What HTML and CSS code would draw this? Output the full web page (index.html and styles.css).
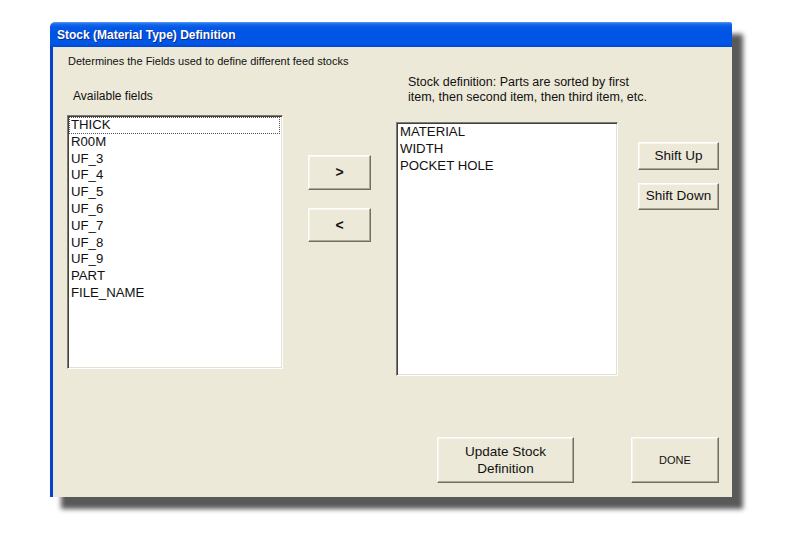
FILE: index.html
```html
<!DOCTYPE html>
<html>
<head>
<meta charset="utf-8">
<title>Stock (Material Type) Definition</title>
<link rel="stylesheet" href="styles.css">
</head>
<body>
<div class="window">
  <div class="titlebar">Stock (Material Type) Definition</div>
  <div class="client">
    <div class="intro">Determines the Fields used to define different feed stocks</div>
    <div class="main">
      <div class="col-avail">
        <div class="label-avail">Available fields</div>
        <div class="listbox list-avail">
          <div class="item focused">THICK</div>
          <div class="item">R00M</div>
          <div class="item">UF_3</div>
          <div class="item">UF_4</div>
          <div class="item">UF_5</div>
          <div class="item">UF_6</div>
          <div class="item">UF_7</div>
          <div class="item">UF_8</div>
          <div class="item">UF_9</div>
          <div class="item">PART</div>
          <div class="item">FILE_NAME</div>
        </div>
      </div>
      <div class="col-move">
        <button class="btn btn-add">&gt;</button>
        <button class="btn btn-remove">&lt;</button>
      </div>
      <div class="col-stock">
        <div class="label-stock">Stock definition: Parts are sorted by first<br>item, then second item, then third item, etc.</div>
        <div class="listbox list-stock">
          <div class="item">MATERIAL</div>
          <div class="item">WIDTH</div>
          <div class="item">POCKET HOLE</div>
        </div>
      </div>
      <div class="col-shift">
        <button class="btn btn-up">Shift Up</button>
        <button class="btn btn-down">Shift Down</button>
      </div>
    </div>
    <div class="footer">
      <button class="btn btn-update">Update Stock<br>Definition</button>
      <button class="btn btn-done">DONE</button>
    </div>
  </div>
</div>
</body>
</html>
```

FILE: styles.css
```css
* { box-sizing: border-box; }

html, body {
  margin: 0;
  padding: 0;
  background: #ffffff;
}

body {
  font-family: "Liberation Sans", Arial, sans-serif;
  color: #111;
  min-height: 550px;
  padding-top: 22px;
}

.window {
  margin: 0 0 40px 50px;
  width: 682px;
  height: 475px;
  display: flex;
  flex-direction: column;
  box-shadow: 11px 12px 5px rgba(60, 60, 60, 0.85);
  border-top-left-radius: 5px;
  border-top-right-radius: 2px;
}

.titlebar {
  height: 25px;
  flex: none;
  padding-left: 7px;
  font-size: 12px;
  font-weight: bold;
  line-height: 26px;
  color: #fff;
  text-shadow: 1px 1px 0 #0c2a8c;
  border-top-left-radius: 5px;
  border-top-right-radius: 2px;
  background: linear-gradient(to bottom, #5a9cf5 0px, #1a6cec 2px, #0659e6 5px, #0054e3 45%, #0056e6 85%, #0049d4 100%);
}

.client {
  flex: 1;
  display: flex;
  flex-direction: column;
  background: #ece9d8;
  border-left: 3px solid #0b3fce;
  padding: 8px 13px 14px 14px;
}

.intro {
  font-size: 11px;
  line-height: 13px;
  padding-left: 1px;
}

.main {
  display: flex;
  margin-top: 7px;
}

.col-avail {
  width: 216px;
  padding-top: 14px;
}

.label-avail {
  font-size: 12px;
  line-height: 15px;
  padding-left: 6px;
  margin-bottom: 11px;
}

.listbox {
  background: #fff;
  border: 1px solid;
  border-color: #7f7d72 #ffffff #ffffff #7f7d72;
  box-shadow: inset 1px 1px 0 #404040, inset -1px -1px 0 #e4e1d2;
  padding: 1px 2px 1px 1px;
  height: 254px;
  font-size: 13.2px;
  line-height: 16.8px;
}

.item {
  padding-left: 2px;
  white-space: nowrap;
}

.item.focused {
  outline: 1px dotted #555;
  outline-offset: -1px;
}

.col-move {
  width: 63px;
  margin-left: 25px;
  padding-top: 80px;
  display: flex;
  flex-direction: column;
}

.btn {
  font-family: "Liberation Sans", Arial, sans-serif;
  color: #111;
  background: #ece9d8;
  border: 1px solid;
  border-color: #ffffff #716f64 #716f64 #ffffff;
  box-shadow: inset -1px -1px 0 #aca899, inset 1px 1px 0 #f7f6ee;
  padding: 0;
  margin: 0;
  font-size: 13.5px;
  line-height: 16.8px;
  text-align: center;
}

.btn-add {
  height: 35px;
  font-weight: bold;
  font-size: 14px;
}

.btn-remove {
  height: 34px;
  margin-top: 18px;
  font-weight: bold;
  font-size: 14px;
}

.col-stock {
  width: 222px;
  margin-left: 25px;
}

.label-stock {
  font-size: 12.5px;
  line-height: 15px;
  padding-left: 12px;
  margin-bottom: 17px;
  white-space: nowrap;
}

.col-shift {
  width: 81px;
  margin-left: 20px;
  padding-top: 67px;
  display: flex;
  flex-direction: column;
}

.btn-up {
  height: 28px;
}

.btn-down {
  height: 27px;
  margin-top: 13px;
}

.footer {
  margin-top: auto;
  display: flex;
  justify-content: flex-end;
  align-items: flex-start;
}

.btn-update {
  width: 137px;
  height: 46px;
  line-height: 17.5px;
}

.btn-done {
  width: 88px;
  height: 46px;
  margin-left: 57px;
  font-size: 11px;
}
```
